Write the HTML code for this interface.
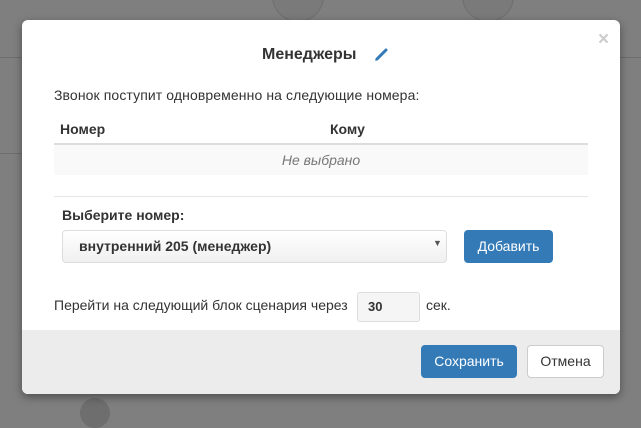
<!DOCTYPE html>
<html><head><meta charset="utf-8"><style>
html,body{margin:0;width:641px;height:421px;overflow:hidden;background:#7f7f7f;font-family:"Liberation Sans",sans-serif;color:#333;font-size:14px}
.m{position:absolute;left:22px;top:20px;width:598px;height:374px;background:#fff;border-radius:6px;overflow:hidden;box-shadow:0 3px 9px rgba(0,0,0,.4)}
.a{position:absolute;white-space:nowrap}
.foot{position:absolute;left:0;top:310px;width:598px;height:64px;background:#ececec}
.btn{position:absolute;border-radius:4px;text-align:center;box-sizing:border-box}
</style></head><body>
<div class="a" style="left:272px;top:-30px;width:50px;height:50px;border-radius:50%;border:1px solid #6e6e6e;background:#7a7a7a"></div>
<div class="a" style="left:462px;top:-30px;width:50px;height:50px;border-radius:50%;border:1px solid #6e6e6e;background:#7a7a7a"></div>
<div class="a" style="left:0;top:57px;width:22px;height:1px;background:#6e6e6e"></div>
<div class="a" style="left:0;top:153px;width:22px;height:1px;background:#6e6e6e"></div>
<div class="a" style="left:620px;top:57px;width:21px;height:1px;background:#6e6e6e"></div>
<div class="a" style="left:80px;top:398px;width:30px;height:30px;border-radius:50%;background:#6e6e6e"></div>
<div class="m">
<div class="a" style="left:576px;top:9px;color:#ccc;font-size:19px;font-weight:bold">×</div>
<div class="a" style="left:240px;top:26px;font-size:16px;font-weight:bold">Менеджеры</div>
<svg class="a" style="left:352px;top:26px" width="16" height="16" viewBox="0 0 16 16"><path d="M3 13 L12 4" stroke="#337ab7" stroke-width="3" stroke-linecap="round"/><path d="M1.5 14.5 L3 13" stroke="#337ab7" stroke-width="1.5"/></svg>
<div class="a" style="left:32px;top:67px;letter-spacing:0.1px">Звонок поступит одновременно на следующие номера:</div>
<div class="a" style="left:38px;top:101px;font-weight:bold">Номер</div>
<div class="a" style="left:308px;top:101px;font-weight:bold">Кому</div>
<div class="a" style="left:32px;top:123px;width:534px;height:2px;background:#ddd"></div>
<div class="a" style="left:32px;top:125px;width:534px;height:30px;background:#f9f9f9"></div>
<div class="a" style="left:32px;top:132px;width:534px;text-align:center;font-style:italic;color:#777">Не выбрано</div>
<div class="a" style="left:32px;top:176px;width:534px;height:1px;background:#e5e5e5"></div>
<div class="a" style="left:40px;top:187px;font-weight:bold">Выберите номер:</div>
<div class="a" style="left:40px;top:210px;width:385px;height:33px;border:1px solid #ddd;border-radius:4px;box-sizing:border-box;background:linear-gradient(#fff,#f0f0f0)"></div>
<div class="a" style="left:57px;top:218px;font-weight:bold">внутренний 205 (менеджер)</div>
<div class="a" style="left:411px;top:218px;font-size:9px;color:#555">▼</div>
<div class="btn" style="left:442px;top:210px;width:89px;height:33px;background:#337ab7;color:#fff;line-height:33px">Добавить</div>
<div class="a" style="left:32px;top:277px">Перейти на следующий блок сценария через</div>
<div class="a" style="left:335px;top:272px;width:63px;height:30px;border:1px solid #ddd;border-radius:3px;box-sizing:border-box;background:#f5f5f5;font-weight:bold;font-size:13px;line-height:28px;padding-left:10px">30</div>
<div class="a" style="left:404px;top:277px">сек.</div>
<div class="foot">
<div class="btn" style="left:399px;top:15px;width:96px;height:33px;background:#337ab7;color:#fff;line-height:33px">Сохранить</div>
<div class="btn" style="left:505px;top:15px;width:77px;height:33px;background:#fff;border:1px solid #ccc;line-height:31px">Отмена</div>
</div>
</div>
</body></html>
